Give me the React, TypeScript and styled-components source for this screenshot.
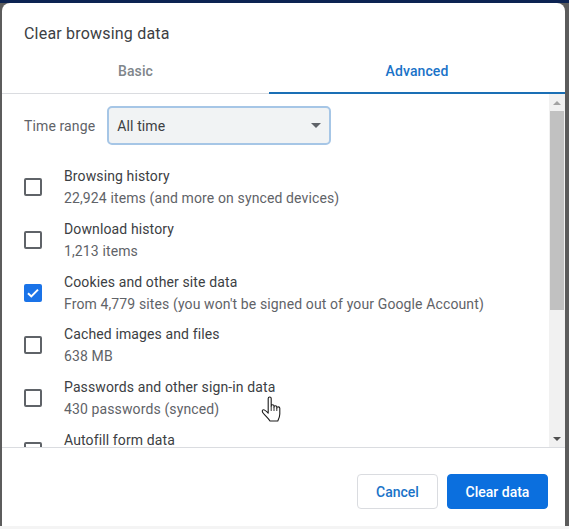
import React from 'react';
import styled, { createGlobalStyle } from 'styled-components';

const GlobalStyle = createGlobalStyle`
  html, body {
    margin: 0;
    padding: 0;
    background: #5c5c5c;
    font-family: Roboto, "Liberation Sans", sans-serif;
  }
`;

// Dark page behind the dialog, only slivers of it are visible
const Backdrop = styled.div`
  position: relative;
  width: 569px;
  height: 529px;
  box-sizing: border-box;
  padding: 3px 4px 3px 2px;
  overflow: hidden;
  background: linear-gradient(
    to bottom,
    #0c2352 0,
    #0c2352 3px,
    #5c5c5c 3px,
    #5c5c5c 526px,
    #f4f4f4 526px,
    #f4f4f4 100%
  );
`;

const Dialog = styled.div`
  width: 100%;
  height: 100%;
  background: #fff;
  border-radius: 8px 8px 0 0;
  display: flex;
  flex-direction: column;
  overflow: hidden;
`;

const Title = styled.h1`
  margin: 0;
  padding: 21px 22px 0;
  height: 27px;
  font-size: 16px;
  line-height: 19px;
  font-weight: 400;
  letter-spacing: 0.2px;
  color: #3c4043;
`;

const Tabs = styled.div`
  display: flex;
  height: 42px;
  flex: none;
  border-bottom: 1px solid #dadce0;
`;

const Tab = styled.div<{ $active?: boolean }>`
  flex: ${(props) => (props.$active ? 296 : 267)};
  margin-bottom: -1px;
  padding-top: 12px;
  box-sizing: border-box;
  text-align: center;
  font-size: 14px;
  line-height: 16px;
  font-weight: 500;
  letter-spacing: 0.1px;
  color: ${(props) => (props.$active ? '#1a73c8' : '#80868b')};
  border-bottom: 2px solid ${(props) => (props.$active ? '#1a6fb5' : 'transparent')};
`;

const Body = styled.div`
  display: flex;
  height: 353px;
  flex: none;
`;

const Content = styled.div`
  flex: 1;
  overflow: hidden;
  padding: 12px 0 0 22px;
`;

const RangeRow = styled.div`
  display: flex;
  align-items: center;
  gap: 12px;
  margin-bottom: 15.6px;
`;

const RangeLabel = styled.span`
  font-size: 14px;
  letter-spacing: 0.12px;
  color: #5f6368;
`;

const Select = styled.div`
  width: 224px;
  height: 39px;
  box-sizing: border-box;
  display: flex;
  align-items: center;
  justify-content: space-between;
  padding: 0 8px 0 8px;
  background: #f1f3f4;
  border: 2px solid #a6c6e6;
  border-radius: 5px;
  font-size: 14px;
  letter-spacing: 0.12px;
  color: #3c4043;
`;

const Caret = styled.span`
  width: 0;
  height: 0;
  border-left: 5.5px solid transparent;
  border-right: 5.5px solid transparent;
  border-top: 5px solid #5f6368;
`;

const Row = styled.div`
  display: flex;
  align-items: center;
  height: 52.8px;
  flex: none;
`;

const Box = styled.span<{ $checked?: boolean }>`
  width: 18px;
  height: 18px;
  box-sizing: border-box;
  flex: none;
  margin-right: 22px;
  display: flex;
  align-items: center;
  justify-content: center;
  border-radius: 2px;
  border: ${(props) => (props.$checked ? 'none' : '2px solid #5f6368')};
  background: ${(props) => (props.$checked ? '#1a73e8' : 'transparent')};
`;

const Label = styled.div`
  font-size: 14px;
  line-height: 22px;
  letter-spacing: 0.12px;
  color: #3c4043;
  white-space: nowrap;
`;

const Sub = styled.div`
  font-size: 14px;
  line-height: 22px;
  min-height: 22px;
  letter-spacing: 0.12px;
  color: #5f6368;
  white-space: nowrap;
`;

const Scrollbar = styled.div`
  width: 16px;
  flex: none;
  background: #f1f1f1;
  display: flex;
  flex-direction: column;
  align-items: center;
  padding: 7px 0 6px;
  box-sizing: border-box;
`;

const ArrowUp = styled.span`
  width: 0;
  height: 0;
  border-left: 4px solid transparent;
  border-right: 4px solid transparent;
  border-bottom: 4px solid #a3a3a3;
`;

const ArrowDown = styled.span`
  width: 0;
  height: 0;
  margin-top: auto;
  border-left: 4px solid transparent;
  border-right: 4px solid transparent;
  border-top: 4px solid #505050;
`;

const Thumb = styled.div`
  width: 14px;
  height: 199px;
  margin-top: 6px;
  background: #c1c1c1;
`;

const Footer = styled.div`
  flex: 1;
  border-top: 1px solid #dadce0;
  display: flex;
  justify-content: flex-end;
  align-items: flex-start;
  gap: 9px;
  padding: 26px 17px 0 0;
`;

const Button = styled.button<{ $primary?: boolean }>`
  height: 35px;
  padding: 0;
  width: ${(props) => (props.$primary ? '101px' : '81px')};
  border-radius: 4px;
  font-family: inherit;
  font-size: 14px;
  font-weight: 500;
  color: ${(props) => (props.$primary ? '#fff' : '#1a73c8')};
  background: ${(props) => (props.$primary ? '#0b6fde' : '#fff')};
  border: 1px solid ${(props) => (props.$primary ? '#0b6fde' : '#dadce0')};
`;

const Cursor = styled.svg`
  position: absolute;
  left: 260px;
  top: 395px;
`;

const items = [
  { label: 'Browsing history', sub: '22,924 items (and more on synced devices)' },
  { label: 'Download history', sub: '1,213 items' },
  { label: 'Cookies and other site data', sub: "From 4,779 sites (you won't be signed out of your Google Account)", checked: true },
  { label: 'Cached images and files', sub: '638 MB' },
  { label: 'Passwords and other sign-in data', sub: '430 passwords (synced)' },
  { label: 'Autofill form data', sub: '' },
];

const App = () => {
  return (
    <Backdrop>
      <GlobalStyle />
      <Dialog>
        <Title>Clear browsing data</Title>
        <Tabs>
          <Tab>Basic</Tab>
          <Tab $active>Advanced</Tab>
        </Tabs>
        <Body>
          <Content>
            <RangeRow>
              <RangeLabel>Time range</RangeLabel>
              <Select>
                All time
                <Caret />
              </Select>
            </RangeRow>
            {items.map((item) => (
              <Row key={item.label}>
                <Box $checked={item.checked}>
                  {item.checked && (
                    <svg width="12" height="10" viewBox="0 0 12 10">
                      <path d="M1 5.2 L4.3 8.4 L11 1.6" fill="none" stroke="#fff" strokeWidth="2" />
                    </svg>
                  )}
                </Box>
                <div>
                  <Label>{item.label}</Label>
                  <Sub>{item.sub}</Sub>
                </div>
              </Row>
            ))}
          </Content>
          <Scrollbar>
            <ArrowUp />
            <Thumb />
            <ArrowDown />
          </Scrollbar>
        </Body>
        <Footer>
          <Button>Cancel</Button>
          <Button $primary>Clear data</Button>
        </Footer>
      </Dialog>
      <Cursor width="24" height="28" viewBox="0 0 24 28">
        <path
          d="M8.2 3.5c0-2 3-2 3 0V11c0-1.6 2.8-1.6 2.8 0v1c0-1.6 2.8-1.6 2.8 0v1c0-1.5 3-1.5 3 .3V19c0 3-1 5-2 7H10c-1.5-2.5-4-4.5-6.5-7.5-1.3-1.6-1.6-3-.6-3.6 1-.6 2.6.4 5.3 3.2V3.5z"
          fill="#fff"
          stroke="#1c1c1c"
          strokeWidth="1.1"
          strokeLinejoin="round"
        />
        <path d="M11.2 11v5M14 12v4M16.8 13v3" stroke="#1c1c1c" strokeWidth="0.9" fill="none" />
      </Cursor>
    </Backdrop>
  );
};

export default App;
